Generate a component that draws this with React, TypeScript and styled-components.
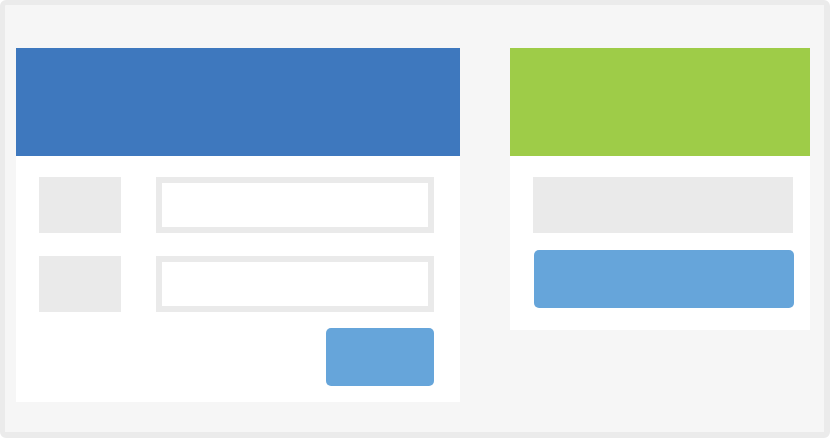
import React from "react";
import styled, { createGlobalStyle } from "styled-components";

const Global = createGlobalStyle`
  html, body {
    margin: 0;
    padding: 0;
    background: #ffffff;
    font-family: "Liberation Sans", Arial, sans-serif;
  }
  * {
    box-sizing: border-box;
  }
`;

const Frame = styled.div`
  width: 830px;
  height: 438px;
  display: flex;
  align-items: flex-start;
  gap: 50px;
  padding: 43px 14px 0 11px;
  background: #f6f6f6;
  border-style: solid;
  border-color: #ebebeb;
  border-width: 5px 6px 6px 5px;
  border-radius: 6px;
`;

const Card = styled.div<{ $width: number }>`
  width: ${(p) => p.$width}px;
  background: #ffffff;
  display: flex;
  flex-direction: column;
`;

const Header = styled.div<{ $color: string }>`
  height: 108px;
  background: ${(p) => p.$color};
`;

const FormBody = styled.div`
  display: flex;
  flex-direction: column;
  gap: 23px;
  padding: 21px 26px 16px 23px;
`;

const Row = styled.div`
  display: flex;
  gap: 35px;
`;

const Label = styled.div`
  width: 82px;
  height: 56px;
  background: #eaeaea;
`;

const Input = styled.div`
  flex: 1;
  height: 56px;
  border: 6px solid #eaeaea;
  background: #ffffff;
`;

const Actions = styled.div`
  display: flex;
  justify-content: flex-end;
  margin-top: -7px;
`;

const Button = styled.div<{ $width?: number }>`
  width: ${(p) => (p.$width ? `${p.$width}px` : "100%")};
  height: 58px;
  background: #66a5da;
  border-radius: 5px;
`;

const SideBody = styled.div`
  display: flex;
  flex-direction: column;
  gap: 17px;
  padding: 21px 16px 22px 23px;
`;

const Field = styled.div`
  width: 260px;
  height: 56px;
  background: #eaeaea;
`;

const SideButton = styled(Button)`
  margin-left: 1px;
  width: 260px;
`;

export default function App() {
  return (
    <>
      <Global />
      <Frame>
        <Card $width={444}>
          <Header $color="#3e78be" />
          <FormBody>
            <Row>
              <Label />
              <Input />
            </Row>
            <Row>
              <Label />
              <Input />
            </Row>
            <Actions>
              <Button $width={108} />
            </Actions>
          </FormBody>
        </Card>
        <Card $width={300}>
          <Header $color="#9ecc48" />
          <SideBody>
            <Field />
            <SideButton />
          </SideBody>
        </Card>
      </Frame>
    </>
  );
}
